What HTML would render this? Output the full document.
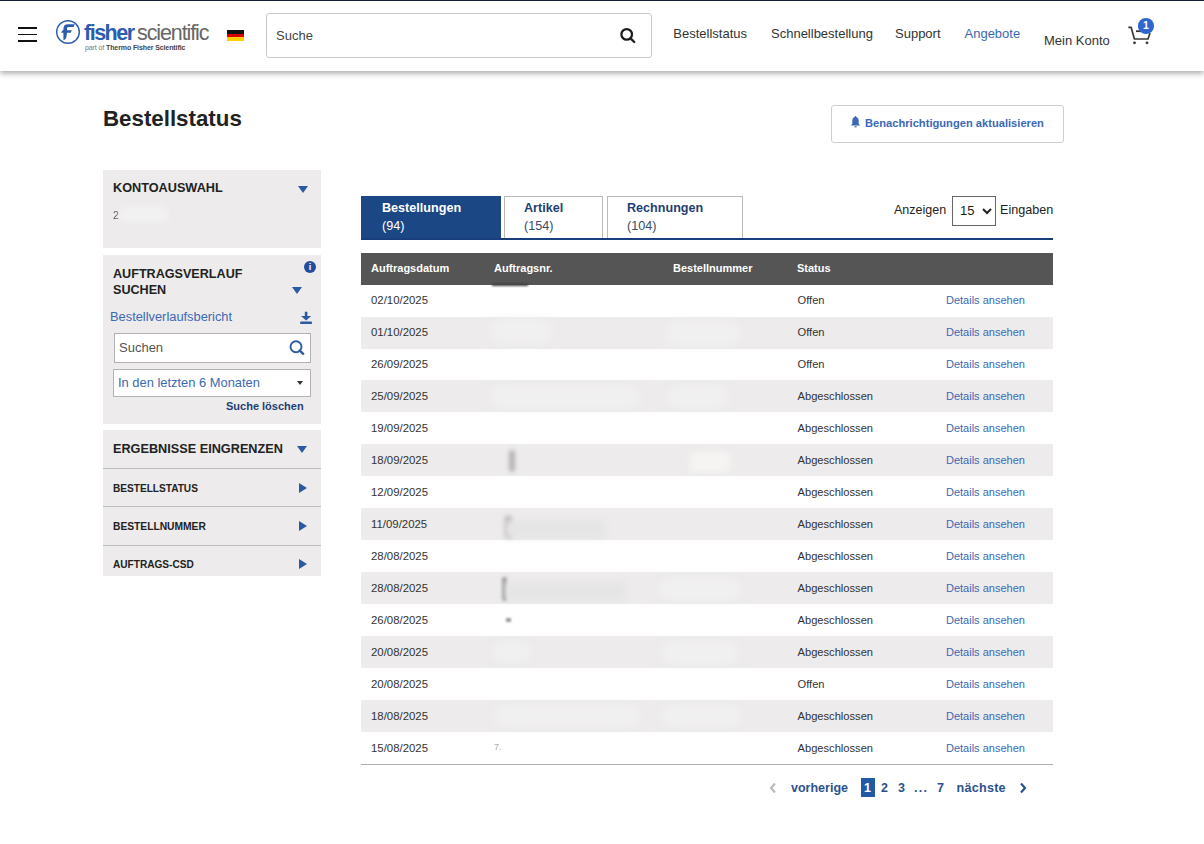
<!DOCTYPE html>
<html><head><meta charset="utf-8">
<style>
*{box-sizing:border-box;margin:0;padding:0}
html,body{width:1204px;height:844px;overflow:hidden;background:#fff}
body{position:relative;font-family:"Liberation Sans",sans-serif;color:#222}
.a{position:absolute}
.t{position:absolute;white-space:nowrap;line-height:1}
.b{font-weight:700}
.blue{color:#3b69b6}
.navy{color:#1f3f73}
.panel{position:absolute;left:103px;width:218px;background:#edebeb}
.tri-d{position:absolute;width:0;height:0;border-left:5.8px solid transparent;border-right:5.8px solid transparent;border-top:7.2px solid #2c5aa0}
.tri-r{position:absolute;width:0;height:0;border-top:5.5px solid transparent;border-bottom:5.5px solid transparent;border-left:8px solid #2c5aa0}
.row{position:absolute;left:361px;width:692px;height:32px}
.row.g{background:#edebeb}
.cell{position:absolute;top:0;white-space:nowrap;line-height:1;font-size:11px;color:#333}
.cell.blue{color:#3b69b6}
</style></head><body>

<!-- HEADER -->
<div class="a" style="left:0;top:0;width:1204px;height:71px;background:#fff;box-shadow:0 1.5px 6px rgba(0,0,0,.38);z-index:2">
  <div class="a" style="left:0;top:0;width:1204px;height:1px;background:#13203f"></div>
  <!-- hamburger -->
  <div class="a" style="left:18px;top:27px;width:19px;height:2px;background:#111"></div>
  <div class="a" style="left:18px;top:34px;width:19px;height:1px;background:#111"></div>
  <div class="a" style="left:18px;top:40px;width:19px;height:2px;background:#111"></div>
  <!-- logo -->
  <svg class="a" style="left:52px;top:16px" width="32" height="32" viewBox="52 16 32 32">
    <circle cx="68" cy="32" r="11.3" fill="none" stroke="#2b5cad" stroke-width="1.45"/>
    <path d="M63.4 40.3 L63.4 32.7 L61.1 32.7 L62.5 30.2 L63.4 30.2 L63.4 28.6 Q63.7 24.2 67.6 24.2 L74.8 24.2 L73.6 26.9 L68.3 26.9 Q67.1 26.9 67.1 28.3 L67.1 30.2 L71.9 30.2 L70.7 32.7 L67 32.7 L66.3 37.4 Q65.7 39.5 63.4 40.3 Z" fill="#2b5cad"/>
  </svg>
  <div class="t b" style="left:84px;top:23px;font-size:21.5px;color:#2b5cad;letter-spacing:-1.5px">fisher</div>
  <div class="t" style="left:137px;top:23px;font-size:21.5px;color:#666;letter-spacing:-1.1px">scientific</div>
  <div class="t" style="left:85px;top:44px;font-size:7px;color:#777;letter-spacing:-0.1px">part of <b style="color:#444">Thermo Fisher Scientific</b></div>
  <!-- flag -->
  <div class="a" style="left:226.6px;top:30px;width:17.7px;height:10.5px">
    <div style="height:3.5px;background:#111"></div><div style="height:3.5px;background:#dd0000"></div><div style="height:3.5px;background:#ffce00"></div>
  </div>
  <!-- search -->
  <div class="a" style="left:266px;top:13px;width:386px;height:45px;border:1px solid #c8c8c8;border-radius:3px"></div>
  <div class="t" style="left:276px;top:29px;font-size:13px;color:#444">Suche</div>
  <svg class="a" style="left:618px;top:26px" width="20" height="20" viewBox="0 0 20 20">
    <circle cx="8.7" cy="8.4" r="5.3" fill="none" stroke="#1a1a1a" stroke-width="2.2"/>
    <line x1="12.6" y1="12.4" x2="16.2" y2="16" stroke="#222" stroke-width="2.4" stroke-linecap="round"/>
  </svg>
  <!-- nav -->
  <div class="t" style="left:673.3px;top:27px;font-size:13px;color:#333">Bestellstatus</div>
  <div class="t" style="left:771px;top:27px;font-size:13px;color:#333">Schnellbestellung</div>
  <div class="t" style="left:895px;top:27px;font-size:13px;color:#333">Support</div>
  <div class="t" style="left:964.5px;top:27px;font-size:13px;color:#3b69b6">Angebote</div>
  <div class="t" style="left:1044px;top:34px;font-size:13px;color:#333">Mein Konto</div>
  <!-- cart -->
  <svg class="a" style="left:1124px;top:14px" width="36" height="34" viewBox="1124 14 36 34">
    <path d="M1128.3 27.4 L1131.2 27.4 L1134.4 39 L1148 39 L1150 33" fill="none" stroke="#3a3a3a" stroke-width="1.7" stroke-linejoin="round"/>
    <path d="M1136 31.2 L1141 31.2" stroke="#333" stroke-width="1.8"/>
    <circle cx="1134.5" cy="42.8" r="1.4" fill="#333"/>
    <circle cx="1147" cy="42.8" r="1.4" fill="#333"/>
    <circle cx="1146" cy="26" r="8.1" fill="#2f67cf"/>
  </svg>
  <div class="t b" style="left:1141px;top:19.5px;width:10px;text-align:center;font-size:10.5px;color:#fff">1</div>
</div>

<!-- TITLE -->
<div class="t b" style="left:103px;top:107.5px;font-size:22.3px;color:#222">Bestellstatus</div>

<!-- notify button -->
<div class="a" style="left:831px;top:105px;width:233px;height:38px;border:1px solid #cfcfcf;border-radius:3px"></div>
<svg class="a" style="left:850px;top:115px" width="11" height="14" viewBox="0 0 11 14">
  <path d="M5.5 1 Q6.3 1 6.4 2 Q8.7 2.6 8.7 5.5 L8.7 8.5 L10 10.4 L1 10.4 L2.3 8.5 L2.3 5.5 Q2.3 2.6 4.6 2 Q4.7 1 5.5 1 Z" fill="#3b69b6"/>
  <path d="M4.2 11.2 L6.8 11.2 Q6.6 12.6 5.5 12.6 Q4.4 12.6 4.2 11.2Z" fill="#3b69b6"/>
</svg>
<div class="t b" style="left:865px;top:118px;font-size:11.15px;color:#3b69b6">Benachrichtigungen aktualisieren</div>

<!-- SIDEBAR -->
<div class="panel" style="top:170px;height:78px"></div>
<div class="t b" style="left:113px;top:182px;font-size:12.7px">KONTOAUSWAHL</div>
<div class="tri-d" style="left:298px;top:186px"></div>
<div class="t" style="left:113px;top:210px;font-size:10.5px;color:#555;filter:blur(0.4px)">2</div>
<div class="a" style="left:119px;top:206px;width:50px;height:16px;background:#f2f1f1;border-radius:8px;filter:blur(3px)"></div>

<div class="panel" style="top:255px;height:169px"></div>
<div class="a" style="left:304px;top:261px;width:12px;height:12px;border-radius:50%;background:#1f4f9a;color:#fff;font:700 9px/12px 'Liberation Sans';text-align:center">i</div>
<div class="t b" style="left:113px;top:265.6px;font-size:12.6px;line-height:16.6px">AUFTRAGSVERLAUF<br>SUCHEN</div>
<div class="tri-d" style="left:292px;top:287px"></div>
<div class="t" style="left:110px;top:311px;font-size:12.85px;color:#3b69b6">Bestellverlaufsbericht</div>
<svg class="a" style="left:299px;top:311px" width="14" height="14" viewBox="0 0 14 14">
  <path d="M5.8 0.8 L8.4 0.8 L8.4 5 L12.2 5 L7.1 9.6 L2 5 L5.8 5 Z" fill="#2c5aa0"/>
  <rect x="1.2" y="10.4" width="11.7" height="2.6" rx="0.6" fill="#2c5aa0"/>
</svg>
<div class="a" style="left:114px;top:333px;width:197px;height:30px;background:#fff;border:1px solid #b3b3b3"></div>
<div class="t" style="left:119px;top:341px;font-size:13px;color:#555">Suchen</div>
<svg class="a" style="left:288px;top:339px" width="18" height="17" viewBox="0 0 18 17">
  <circle cx="8" cy="7.7" r="5.5" fill="none" stroke="#2c5aa0" stroke-width="1.9"/>
  <line x1="11.8" y1="11.6" x2="15.2" y2="14.8" stroke="#2c5aa0" stroke-width="2.4" stroke-linecap="round"/>
</svg>
<div class="a" style="left:113px;top:369px;width:198px;height:28px;background:#fff;border:1px solid #b3b3b3"></div>
<div class="t" style="left:118px;top:377.3px;font-size:12.9px;color:#3b69b6">In den letzten 6 Monaten</div>
<div class="a" style="left:297px;top:381px;width:0;height:0;border-left:3.5px solid transparent;border-right:3.5px solid transparent;border-top:4px solid #333"></div>
<div class="t b navy" style="left:226px;top:400.5px;font-size:11px">Suche löschen</div>

<div class="panel" style="top:430px;height:146px"></div>
<div class="t b" style="left:113px;top:443px;font-size:12.7px">ERGEBNISSE EINGRENZEN</div>
<div class="tri-d" style="left:297px;top:446px"></div>
<div class="a" style="left:103px;top:468px;width:218px;height:1px;background:#bdbdbd"></div>
<div class="t b" style="left:113px;top:483.5px;font-size:10.1px">BESTELLSTATUS</div>
<div class="tri-r" style="left:299px;top:483px"></div>
<div class="a" style="left:103px;top:506px;width:218px;height:1px;background:#bdbdbd"></div>
<div class="t b" style="left:113px;top:521.7px;font-size:10.25px">BESTELLNUMMER</div>
<div class="tri-r" style="left:299px;top:521px"></div>
<div class="a" style="left:103px;top:545px;width:218px;height:1px;background:#bdbdbd"></div>
<div class="t b" style="left:113px;top:559.8px;font-size:10.1px">AUFTRAGS-CSD</div>
<div class="tri-r" style="left:299px;top:559px"></div>

<!-- TABS -->
<div class="a" style="left:361px;top:196px;width:140px;height:44px;background:#1b4885"></div>
<div class="t b" style="left:382px;top:201.9px;font-size:12.6px;color:#fff">Bestellungen</div>
<div class="t" style="left:382px;top:219.8px;font-size:12.6px;color:#fff">(94)</div>
<div class="a" style="left:504px;top:196px;width:99px;height:43px;border:1px solid #bbb;border-bottom:none"></div>
<div class="t b navy" style="left:524px;top:201.9px;font-size:12.6px">Artikel</div>
<div class="t" style="left:524px;top:219.8px;font-size:12.6px;color:#3b4a66">(154)</div>
<div class="a" style="left:607px;top:196px;width:136px;height:43px;border:1px solid #bbb;border-bottom:none"></div>
<div class="t b navy" style="left:627px;top:201.9px;font-size:12.6px">Rechnungen</div>
<div class="t" style="left:627px;top:219.8px;font-size:12.6px;color:#3b4a66">(104)</div>
<div class="a" style="left:361px;top:238px;width:692px;height:2px;background:#183f7c"></div>

<div class="t" style="left:894px;top:204px;font-size:12.5px;color:#222">Anzeigen</div>
<div class="a" style="left:952px;top:196px;width:44px;height:30px;border:1px solid #666;background:#fff"></div>
<div class="t" style="left:960px;top:204px;font-size:13px;color:#222">15</div>
<svg class="a" style="left:981px;top:206px" width="12" height="10" viewBox="0 0 12 10">
  <path d="M2 3 L6 7 L10 3" fill="none" stroke="#222" stroke-width="2"/>
</svg>
<div class="t" style="left:1000px;top:204px;font-size:12.6px;color:#222">Eingaben</div>

<!-- TABLE -->
<div class="a" style="left:361px;top:253px;width:692px;height:32px;background:#555"></div>
<div class="t b" style="left:371px;top:262.6px;font-size:11px;color:#fff">Auftragsdatum</div>
<div class="t b" style="left:494px;top:262.6px;font-size:11px;color:#fff">Auftragsnr.</div>
<div class="t b" style="left:673px;top:262.6px;font-size:11px;color:#fff">Bestellnummer</div>
<div class="t b" style="left:797px;top:262.6px;font-size:11px;color:#fff">Status</div>

<!--ROWS-->
<div class="row g" style="top:317px;height:32px"></div>
<div class="row g" style="top:380px;height:32px"></div>
<div class="row g" style="top:444px;height:32px"></div>
<div class="row g" style="top:508px;height:32px"></div>
<div class="row g" style="top:572px;height:32px"></div>
<div class="row g" style="top:636px;height:32px"></div>
<div class="row g" style="top:700px;height:32px"></div>
<div class="cell" style="left:371px;top:295.2px;font-size:11.4px">02/10/2025</div><div class="cell" style="left:797.5px;top:294.6px;font-size:11.15px">Offen</div><div class="cell blue" style="left:946px;top:294.6px">Details ansehen</div>
<div class="cell" style="left:371px;top:327.2px;font-size:11.4px">01/10/2025</div><div class="cell" style="left:797.5px;top:326.6px;font-size:11.15px">Offen</div><div class="cell blue" style="left:946px;top:326.6px">Details ansehen</div>
<div class="cell" style="left:371px;top:359.2px;font-size:11.4px">26/09/2025</div><div class="cell" style="left:797.5px;top:358.6px;font-size:11.15px">Offen</div><div class="cell blue" style="left:946px;top:358.6px">Details ansehen</div>
<div class="cell" style="left:371px;top:391.2px;font-size:11.4px">25/09/2025</div><div class="cell" style="left:797.5px;top:390.6px;font-size:11.15px">Abgeschlossen</div><div class="cell blue" style="left:946px;top:390.6px">Details ansehen</div>
<div class="cell" style="left:371px;top:423.2px;font-size:11.4px">19/09/2025</div><div class="cell" style="left:797.5px;top:422.6px;font-size:11.15px">Abgeschlossen</div><div class="cell blue" style="left:946px;top:422.6px">Details ansehen</div>
<div class="cell" style="left:371px;top:455.2px;font-size:11.4px">18/09/2025</div><div class="cell" style="left:797.5px;top:454.6px;font-size:11.15px">Abgeschlossen</div><div class="cell blue" style="left:946px;top:454.6px">Details ansehen</div>
<div class="cell" style="left:371px;top:487.2px;font-size:11.4px">12/09/2025</div><div class="cell" style="left:797.5px;top:486.6px;font-size:11.15px">Abgeschlossen</div><div class="cell blue" style="left:946px;top:486.6px">Details ansehen</div>
<div class="cell" style="left:371px;top:519.2px;font-size:11.4px">11/09/2025</div><div class="cell" style="left:797.5px;top:518.6px;font-size:11.15px">Abgeschlossen</div><div class="cell blue" style="left:946px;top:518.6px">Details ansehen</div>
<div class="cell" style="left:371px;top:551.2px;font-size:11.4px">28/08/2025</div><div class="cell" style="left:797.5px;top:550.6px;font-size:11.15px">Abgeschlossen</div><div class="cell blue" style="left:946px;top:550.6px">Details ansehen</div>
<div class="cell" style="left:371px;top:583.2px;font-size:11.4px">28/08/2025</div><div class="cell" style="left:797.5px;top:582.6px;font-size:11.15px">Abgeschlossen</div><div class="cell blue" style="left:946px;top:582.6px">Details ansehen</div>
<div class="cell" style="left:371px;top:615.2px;font-size:11.4px">26/08/2025</div><div class="cell" style="left:797.5px;top:614.6px;font-size:11.15px">Abgeschlossen</div><div class="cell blue" style="left:946px;top:614.6px">Details ansehen</div>
<div class="cell" style="left:371px;top:647.2px;font-size:11.4px">20/08/2025</div><div class="cell" style="left:797.5px;top:646.6px;font-size:11.15px">Abgeschlossen</div><div class="cell blue" style="left:946px;top:646.6px">Details ansehen</div>
<div class="cell" style="left:371px;top:679.2px;font-size:11.4px">20/08/2025</div><div class="cell" style="left:797.5px;top:678.6px;font-size:11.15px">Offen</div><div class="cell blue" style="left:946px;top:678.6px">Details ansehen</div>
<div class="cell" style="left:371px;top:711.2px;font-size:11.4px">18/08/2025</div><div class="cell" style="left:797.5px;top:710.6px;font-size:11.15px">Abgeschlossen</div><div class="cell blue" style="left:946px;top:710.6px">Details ansehen</div>
<div class="cell" style="left:371px;top:743.2px;font-size:11.4px">15/08/2025</div><div class="cell" style="left:797.5px;top:742.6px;font-size:11.15px">Abgeschlossen</div><div class="cell blue" style="left:946px;top:742.6px">Details ansehen</div>
<!--/ROWS-->
<!--BLOBS-->
<div class="a" style="left:490px;top:320px;width:62px;height:22px;background:#f1f0f0;border-radius:10px;filter:blur(4px)"></div>
<div class="a" style="left:666px;top:322px;width:74px;height:22px;background:#f1f0f0;border-radius:10px;filter:blur(4px)"></div>
<div class="a" style="left:490px;top:386px;width:150px;height:22px;background:#f1f0f0;border-radius:10px;filter:blur(4px)"></div>
<div class="a" style="left:668px;top:386px;width:60px;height:22px;background:#f1f0f0;border-radius:10px;filter:blur(4px)"></div>
<div class="a" style="left:509px;top:450px;width:6px;height:22px;background:#b5b4b4;border-radius:3px;filter:blur(2px)"></div>
<div class="a" style="left:690px;top:452px;width:40px;height:20px;background:#f5f4f3;filter:blur(3px)"></div>
<div class="a" style="left:505px;top:516px;width:7px;height:22px;background:#b0afaf;border-radius:3px;filter:blur(2px)"></div>
<div class="a" style="left:505px;top:520px;width:100px;height:18px;background:#e6e5e5;filter:blur(3px)"></div>
<div class="a" style="left:502px;top:577px;width:5px;height:24px;background:#a0a0a0;border-radius:2px;filter:blur(1.5px)"></div>
<div class="a" style="left:505px;top:582px;width:120px;height:18px;background:#e6e5e5;filter:blur(3px)"></div>
<div class="a" style="left:506px;top:618px;width:5px;height:4px;background:#999;filter:blur(1px)"></div>
<div class="a" style="left:492px;top:283px;width:36px;height:3px;background:#444;filter:blur(1px)"></div>
<div class="a" style="left:660px;top:578px;width:80px;height:22px;background:#f1f0f0;border-radius:10px;filter:blur(4px)"></div>
<div class="a" style="left:492px;top:642px;width:40px;height:20px;background:#f1f0f0;border-radius:10px;filter:blur(4px)"></div>
<div class="a" style="left:662px;top:642px;width:76px;height:22px;background:#f1f0f0;border-radius:10px;filter:blur(4px)"></div>
<div class="a" style="left:495px;top:705px;width:145px;height:22px;background:#f1f0f0;border-radius:10px;filter:blur(4px)"></div>
<div class="a" style="left:662px;top:705px;width:78px;height:22px;background:#f1f0f0;border-radius:10px;filter:blur(4px)"></div>
<div class="t" style="left:494px;top:743px;font-size:9px;color:#aaa;filter:blur(0.5px)">7.</div>
<!--/BLOBS-->
<div class="a" style="left:361px;top:764px;width:692px;height:1px;background:#b0b0b0"></div>

<!-- PAGINATION -->
<svg class="a" style="left:766px;top:781px" width="14" height="14" viewBox="0 0 14 14">
  <path d="M9 2.5 L5 7 L9 11.5" fill="none" stroke="#bbb" stroke-width="2.2"/>
</svg>
<div class="t b" style="left:791px;top:781.5px;font-size:12.5px;color:#2b528f">vorherige</div>
<div class="a" style="left:861px;top:778px;width:14px;height:19px;background:#2358a5"></div>
<div class="t b" style="left:864px;top:781.5px;font-size:12.5px;color:#fff">1</div>
<div class="t b" style="left:881px;top:781.5px;font-size:12.5px;color:#2b528f">2</div>
<div class="t b" style="left:898px;top:781.5px;font-size:12.5px;color:#2b528f">3</div>
<div class="t b" style="left:914px;top:781.5px;font-size:12.5px;color:#2b528f;letter-spacing:1.3px">...</div>
<div class="t b" style="left:937px;top:781.5px;font-size:12.5px;color:#2b528f">7</div>
<div class="t b" style="left:956.5px;top:781.5px;font-size:12.6px;color:#2b528f;letter-spacing:0.25px">nächste</div>
<svg class="a" style="left:1016px;top:781px" width="14" height="14" viewBox="0 0 14 14">
  <path d="M5 2.5 L9 7 L5 11.5" fill="none" stroke="#2b528f" stroke-width="2.2"/>
</svg>

</body></html>
